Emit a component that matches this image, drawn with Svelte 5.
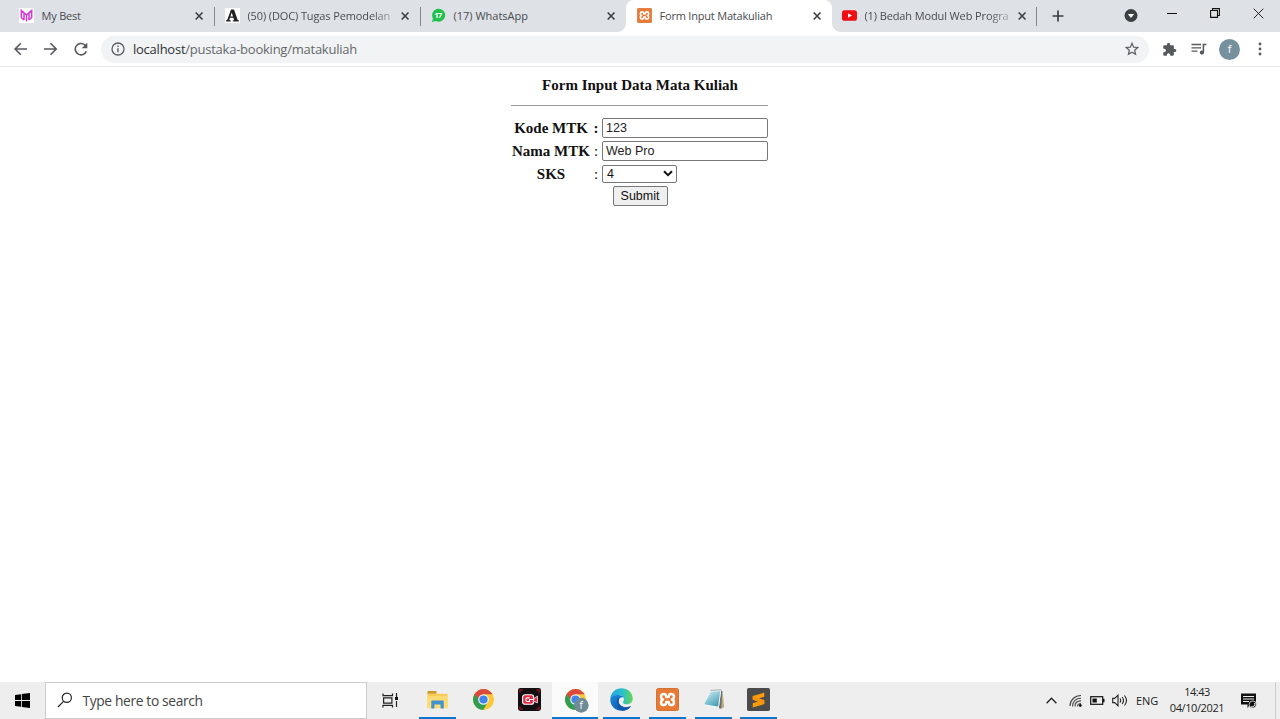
<script>
  const tabs = [
    { icon: 'my', title: 'My Best' },
    { icon: 'academia', title: '(50) (DOC) Tugas Pemodelan', fade: true },
    { icon: 'wa', title: '(17) WhatsApp' },
    { icon: 'xampp', title: 'Form Input Matakuliah', active: true },
    { icon: 'yt', title: '(1) Bedah Modul Web Progra', fade: true }
  ];
  const apps = [
    { icon: 'folder', open: true },
    { icon: 'chrome' },
    { icon: 'recorder' },
    { icon: 'chromeUser', open: true, active: true },
    { icon: 'edge', open: true },
    { icon: 'xampp', open: true },
    { icon: 'notepad', open: true },
    { icon: 'sublime', open: true }
  ];
  let kode = $state('123');
  let nama = $state('Web Pro');
</script>

{#snippet chromeLogo()}
  <circle cx="12" cy="12" r="11" fill="#fbc934" />
  <path d="M12 12 2.5 6.5A11 11 0 0 1 21.5 6.5H12Z" fill="#dc4a3d" />
  <path d="M2.5 6.5A11 11 0 0 0 11.6 23L16.6 14.6 12 12 7.3 14.7Z" fill="#2f9e50" />
  <path d="M2.5 6.5 7.3 14.7 12 12 12 6.5Z" fill="#dc4a3d" />
  <path d="M2.5 6.5 7.3 14.7 8 12Z" fill="#2f9e50" />
  <circle cx="12" cy="12" r="5.5" fill="#f4f4f4" />
  <circle cx="12" cy="12" r="4.3" fill="#4285ec" />
{/snippet}

{#snippet icon(name)}
  {#if name === 'my'}
    <svg viewBox="0 0 15 15"><rect width="15" height="15" fill="#fff" /><path d="M2.300 10V2.500L7.500 7l5.200-4.500V10M5 12V5M10 12V5M7.500 7.500v6M2.300 9.500 5 12M12.700 9.500 10 12" fill="none" stroke="#d735d8" stroke-width="1.500" /></svg>
  {:else if name === 'academia'}
    <svg viewBox="0 0 15 15"><rect width="15" height="15" fill="#fff" /><path d="M6 1.500h3L12.700 12l1.200.5v.9H7.800v-.9l1.300-.5-.7-2.200H5L4.300 12l1.400.5v.9H1v-.9l1.200-.5ZM6.700 4.500 5.400 8.600H8Z" fill="#222" /></svg>
  {:else if name === 'wa'}
    <svg viewBox="0 0 15 15"><path d="M1 14 2 10.5A6.500 6.500 0 1 1 4.600 13Z" fill="#1fc04b" /><text x="7.300" y="10.200" text-anchor="middle" font-size="7.800" font-weight="700" fill="#fff" textLength="8">17</text></svg>
  {:else if name === 'xampp'}
    <svg viewBox="0 0 24 24"><rect x=".5" y=".5" width="23" height="23" rx="2" fill="#e87a35" stroke="#cf6d30" /><path d="M8.200 6.200C4.300 6.200 4.500 11.200 7.400 12 4.500 12.800 4.300 17.800 8.200 17.800c2.300 0 2.500-1.600 2.500-3.300h2.600c0 1.700.2 3.300 2.500 3.300 3.900 0 3.700-5 .8-5.800 2.900-.8 3.100-5.800-.8-5.800-2.300 0-2.500 1.600-2.500 3.300h-2.600c0-1.700-.2-3.300-2.500-3.300Z" fill="none" stroke="#fff" stroke-width="2.500" stroke-linejoin="round" /></svg>
  {:else if name === 'yt'}
    <svg viewBox="0 0 15 15"><rect y="2.200" width="15" height="10.600" rx="2.600" fill="#f20d14" /><path d="m6 5.300 4 2.200-4 2.200Z" fill="#fff" /></svg>
  {:else if name === 'folder'}
    <svg viewBox="0 0 24 24"><path d="M1.500 6h21v15h-21Z" fill="#f7cb57" /><path d="M1.500 6V4q0-1 1-1H10q1 0 1 1v2Z" fill="#cf9a24" /><path d="M1.500 8.500h21V21h-21Z" fill="#ffdb75" /><path d="M5.500 21.500V14q0-1 1-1h11q1 0 1 1v7.500h-3.300v-4.200H8.800v4.200Z" fill="#4193ce" /></svg>
  {:else if name === 'chrome'}
    <svg viewBox="0 0 24 24">{@render chromeLogo()}</svg>
  {:else if name === 'chromeUser'}
    <svg viewBox="0 0 24 24" class="overflow">{@render chromeLogo()}<circle cx="18" cy="18" r="7.700" fill="#6f8b98" /><text x="18" y="21.600" text-anchor="middle" font-size="10.500" fill="#fff">f</text></svg>
  {:else if name === 'recorder'}
    <svg viewBox="0 0 24 24"><rect width="24" height="24" rx="2.500" fill="#130e11" /><path d="M2 5V2h3M19 2h3v3M22 19v3h-3M5 22H2v-3" fill="none" stroke="#ae1728" stroke-width="1.100" /><rect x="4.800" y="7" width="11.500" height="10" rx="2.500" fill="#e12c48" stroke="#fff" stroke-width="1.200" /><path d="m16.500 11 3.800-2.500v7L16.500 14" fill="#e12c48" stroke="#fff" stroke-width=".8" /><path d="M12 10.300H9.500a1.900 1.900 0 0 0 0 3.700H12v-2h5" fill="none" stroke="#fff" stroke-width="1.100" /></svg>
  {:else if name === 'edge'}
    <svg viewBox="0 0 24 24">
      <defs>
        <linearGradient id="edgeTop"><stop offset="0" stop-color="#1fa4df" /><stop offset=".55" stop-color="#2cc0cf" /><stop offset="1" stop-color="#66d64b" /></linearGradient>
        <linearGradient id="edgeLow" x1="0" y1="0" x2="1" y2="1"><stop offset="0" stop-color="#1b8be0" /><stop offset="1" stop-color="#0b4a9b" /></linearGradient>
      </defs>
      <path d="M.3 11C1.200 4.500 6 .3 12 .3c6.800 0 11.700 5 11.700 10.700 0 3.700-2.600 6-6 6-2.600 0-4.200-.9-4.200-2 0-.8 1.100-1.200 1.100-3 0-2.500-2.600-4.600-6.100-4.600-3.700 0-6.500 1.300-8.200 3.600Z" fill="url(#edgeTop)" />
      <path d="M.3 12.500C.3 9 3.600 7.400 8.500 7.400c2.700 0 4.700 1 5.600 2.400C10.800 9.200 9 11 9 13.700c0 3.700 4 6.300 8.200 6.300 2 0 3.600-.5 4.700-1.100C20 22 16.500 23.800 12.500 23.800 5.700 23.800.3 18.700.3 12.500Z" fill="url(#edgeLow)" />
      <path d="M8.500 10.500C5.500 14.500 7.500 21 13 23.700c4 0 7-1.800 8.900-4.800-6 3-13 .5-12.900-5.200 0-1.200.3-2.300 1-3.200Z" fill="#1058a9" />
    </svg>
  {:else if name === 'notepad'}
    <svg viewBox="0 0 24 24">
      <defs><linearGradient id="page" x1="0" y1="0" x2=".7" y2="1"><stop offset="0" stop-color="#d5edf2" /><stop offset=".5" stop-color="#8ec9d7" /><stop offset="1" stop-color="#479db7" /></linearGradient></defs>
      <path d="m20 2.500 1.500 1 1.700 16.500L19 22Z" fill="#c2ad7c" /><path d="m20 2.500 1 1-.8 18-2.700-.5Z" fill="#69706f" /><path d="M9 2.500 20 2 17.600 21 .8 18.200Z" fill="#e9f5f7" /><path d="M9.200 4 19 3.500 16.800 19.200 2.400 17Z" fill="url(#page)" /><path d="m8.700 2.400 11.500-.5" stroke="#a0a9a8" />
    </svg>
  {:else if name === 'sublime'}
    <svg viewBox="0 0 24 24"><rect width="24" height="24" rx="1.800" fill="#4b4b4b" /><path d="m6 8.300 12-3.500V9l-6 2 6 2v3.800L6 20.300V16l6-2-6-2Z" fill="#ff9c0a" /><path d="m6 8.300 12 4.300v4.200L6 12.300Z" fill="#f9920a" /></svg>
  {/if}
{/snippet}

<div class="screen">
  <header class="tabstrip">
    {#each tabs as tab, i}
      <div class="tab" class:active={tab.active} class:line={i !== 2 && i !== 3}>
        <span class="favicon">{@render icon(tab.icon)}</span>
        <span class="title t{i}" class:fade={tab.fade}>{tab.title}</span>
        <svg class="close" viewBox="0 0 10 10"><path d="m1.700 1.500 6.800 7m0-7-6.800 7" stroke="#3c4043" stroke-width="1.600" /></svg>
      </div>
    {/each}
    <svg class="plus" viewBox="0 0 12 12"><path d="M6 .5v11M.5 6h11" stroke="#3c4043" stroke-width="1.700" /></svg>
    <div class="controls">
      <svg width="14" height="14" viewBox="0 0 14 14"><circle cx="7" cy="7.500" r="6.500" fill="#3c4043" /><path d="M3.900 5.900h6.200L7 10Z" fill="#fff" /></svg>
      <svg class="min" width="10" height="12" viewBox="0 0 10 12"><path d="M0 6.500h10" stroke="#111" /></svg>
      <svg class="max" width="10" height="10" viewBox="0 0 10 10"><path d="M.6 2.500h6.900v6.900H.6ZM2.500 2.500V.6h6.900v6.900H7.500" fill="none" stroke="#111" stroke-width="1.100" /></svg>
      <svg class="quit" width="11" height="11" viewBox="0 0 11 11"><path d="m.7.7 9.600 9.600m0-9.600L.7 10.300" stroke="#222" /></svg>
    </div>
  </header>

  <nav class="toolbar">
    <svg class="nav" viewBox="0 0 14 14"><path d="M13 7H1.500M6.800 1.300 1.100 7l5.700 5.700" fill="none" stroke="#55585c" stroke-width="1.600" /></svg>
    <svg class="nav" viewBox="0 0 14 14"><path d="M0 7h12M6.500 1.300 12.200 7l-5.700 5.700" fill="none" stroke="#55585c" stroke-width="1.600" /></svg>
    <svg class="nav" viewBox="0 0 14 14"><path d="M12.300 9.200A5.700 5.700 0 1 1 10.800 2.900L11.500 3.600" fill="none" stroke="#55585c" stroke-width="1.600" /><path d="M13.300.7v5.600H7.700Z" fill="#55585c" /></svg>
    <div class="omnibox">
      <svg width="14" height="14" viewBox="0 0 14 14"><circle cx="7" cy="7" r="6" fill="none" stroke="#5a5d61" stroke-width="1.300" /><path d="M7 6.200v4M7 3.500v1.400" stroke="#5a5d61" stroke-width="1.400" /></svg>
      <span class="url"><b>localhost</b>/pustaka-booking/matakuliah</span>
      <svg class="star" width="14" height="14" viewBox="0 0 14 14"><path d="m7 1.300 1.650 3.850 4.150.35-3.150 2.750.95 4.100L7 10.200l-3.600 2.150.95-4.100L1.200 5.500l4.150-.35Z" fill="none" stroke="#5a5d61" stroke-width="1.200" /></svg>
    </div>
    <svg class="puzzle" viewBox="0 0 24 24"><path d="M20.500 11H19V7a2 2 0 0 0-2-2h-4V3.500a2.500 2.500 0 0 0-5 0V5H4a2 2 0 0 0-2 2v3.800h1.500a2.700 2.700 0 0 1 0 5.400H2V20a2 2 0 0 0 2 2h3.800v-1.500a2.700 2.700 0 0 1 5.400 0V22H17a2 2 0 0 0 2-2v-4h1.500a2.500 2.500 0 0 0 0-5Z" fill="#55585c" /></svg>
    <svg class="music" viewBox="0 0 16 13"><path d="M.5 1.500h9.500M.5 4.800h9.500M.5 8.100h6" stroke="#55585c" stroke-width="1.300" /><path d="M12.400 9.500V1.500h3" fill="none" stroke="#55585c" stroke-width="1.500" /><circle cx="10.900" cy="9.600" r="2.100" fill="#55585c" /></svg>
    <span class="avatar">f</span>
    <svg class="dots" viewBox="0 0 4 14"><circle cx="2" cy="2" r="1.400" /><circle cx="2" cy="7" r="1.400" /><circle cx="2" cy="12" r="1.400" /></svg>
  </nav>

  <main>
    <form onsubmit={(e) => e.preventDefault()}>
      <h1>Form Input Data Mata Kuliah</h1>
      <hr />
      <div class="row first"><b>Kode MTK</b><b class="colon">:</b><input bind:value={kode} /></div>
      <div class="row second"><b>Nama MTK</b><span class="colon">:</span><input bind:value={nama} /></div>
      <div class="row third">
        <b>SKS</b><span class="colon">:</span>
        <div class="select"><span>4</span><svg width="10" height="7" viewBox="0 0 10 7"><path d="m1 1.200 4 4 4-4" fill="none" stroke="#111" stroke-width="2" /></svg></div>
      </div>
      <button>Submit</button>
    </form>
  </main>

  <footer>
    <div class="start"><svg width="15" height="15" viewBox="0 0 15 15"><path d="m0 2 6-.8v5.900H0ZM6.800 1.100 15 0v7.100H6.800ZM0 7.900h6v5.900L0 13ZM6.800 7.900H15V15l-8.200-1.100Z" /></svg></div>
    <div class="search">
      <svg width="16" height="16" viewBox="0 0 16 16"><circle cx="9.800" cy="5.800" r="4.600" fill="none" stroke="#222" stroke-width="1.200" /><path d="M6.500 9.300 1 15" stroke="#222" stroke-width="1.200" /></svg>
      <span>Type here to search</span>
    </div>
    <div class="taskview"><svg width="17" height="15" viewBox="0 0 17 15"><path d="M1 .5v2.200h9.500V.5M1 14.500v-2.200h9.500v2.200M1.600 4.800h8.300v5.400H1.600ZM14.500 0v4M14.500 8v6" fill="none" stroke="#222" stroke-width="1.200" /><rect x="13" y="4" width="3" height="3" fill="#111" /></svg></div>
    {#each apps as app}
      <div class="app" class:current={app.active}><span class="appicon">{@render icon(app.icon)}</span><i class:open={app.open}></i></div>
    {/each}
    <div class="tray">
      <svg class="chev" width="11" height="7" viewBox="0 0 11 7"><path d="m.6 6.200 4.900-5 4.900 5" fill="none" stroke="#222" stroke-width="1.300" /></svg>
      <svg class="wifi" width="13" height="13" viewBox="0 0 13 13"><g fill="none" stroke="#444" stroke-width="1.100"><path d="M1 12C1 6 6 1.500 12 1.500M3.500 12.500c0-5 3.700-8.300 8.500-8.300M6 12.500c0-3.500 2.500-5.600 6-5.600M8.500 12.500c0-2 1.300-3 3.500-3" /></g><circle cx="11.300" cy="11.500" r="1.400" fill="#111" /></svg>
      <svg class="battery" width="15" height="9" viewBox="0 0 15 9"><rect x=".7" y=".7" width="12" height="7.600" fill="none" stroke="#111" stroke-width="1.200" /><path d="M2.500 2.500h4.300v4H2.500ZM13 2.800h1.500v3.400H13Z" fill="#111" /></svg>
      <svg class="sound" width="16" height="13" viewBox="0 0 16 13"><path d="M.7 4.400h2L6 1.200v10.600L2.700 8.600h-2ZM8 4.500q1.400 2 0 4M10.200 3q2.600 3.500 0 7M12.500 1.500q4 5 0 10" fill="none" stroke="#222" stroke-width="1.100" /></svg>
      <span class="lang">ENG</span>
      <div class="clock"><span class="time">14:43</span><span class="date">04/10/2021</span></div>
      <svg class="note" width="16" height="16" viewBox="0 0 16 16"><path d="M0 .5h15v11H9L6.500 15v-3.500H0Z" fill="#111" /><path d="M2 3.500h11M2 6h11M2 8.500h6" stroke="#eee" /><circle cx="11.700" cy="11.500" r="3.600" fill="#111" stroke="#eee" stroke-width=".8" /><path d="M10.200 13.500a2.500 2.500 0 0 0 3.300-3.500" fill="none" stroke="#eee" /></svg>
    </div>
  </footer>
</div>

<style>
  :global(body) { margin: 0; overflow: hidden; background: #fff; }
  .screen { width: 1280px; height: 719px; display: flex; flex-direction: column; font-family: "Open Sans", sans-serif; color: #3c4043; }
  .screen * { box-sizing: border-box; }
  svg { display: block; flex: none; }
  .overflow { overflow: visible; }

  .tabstrip { height: 32px; background: #dee1e6; display: flex; padding-left: 8px; flex: none; }
  .tab { width: 206px; height: 32px; display: flex; align-items: center; padding: 0 0 1px 11px; position: relative; flex: none; }
  .tab:nth-child(5) { width: 204px; padding-left: 10px; }
  .tab.line::after { content: ""; position: absolute; right: -1px; top: 7px; width: 1px; height: 19px; background: #85888d; }
  .tab.active { background: #fff; border-radius: 8px 8px 0 0; }
  .tab.active::before, .tab.active::after { content: ""; position: absolute; bottom: 0; width: 8px; height: 8px; }
  .tab.active::before { left: -8px; background: radial-gradient(circle at 0 0, #dee1e6 7.500px, #fff 8px); }
  .tab.active::after { right: -8px; background: radial-gradient(circle at 100% 0, #dee1e6 7.500px, #fff 8px); }
  .favicon { width: 15px; height: 15px; margin-right: 7.500px; flex: none; }
  .favicon svg { width: 15px; height: 15px; }
  .title { width: 144px; margin-right: 8.500px; font-size: 11px; line-height: 16px; letter-spacing: -.2px; white-space: nowrap; color: #494c50; flex: none; }
  .t0 { letter-spacing: -.2px; }
  .t1 { letter-spacing: -.12px; }
  .t2 { letter-spacing: 0; }
  .t4 { letter-spacing: -.12px; }
  .fade { mask-image: linear-gradient(90deg, #000 86%, transparent 106%); }
  .close { width: 10px; height: 10px; }
  .plus { width: 12px; height: 12px; margin: 10px 0 0 16px; }
  .controls { margin-left: auto; padding: 8px 16px 0 0; display: flex; align-items: flex-start; }
  .min { margin: -1px 0 0 29px; }
  .max { margin: 0 0 0 33px; }
  .quit { margin: 0 0 0 33px; }

  .toolbar { height: 35px; border-bottom: 1px solid #e8e8e8; display: flex; align-items: center; padding: 0 18px 0 14px; flex: none; }
  .nav { width: 14px; height: 14px; margin-right: 16px; }
  .nav:nth-child(3) { margin-right: 13px; }
  .omnibox { width: 1048px; height: 27px; border-radius: 14px; background: #f1f3f4; display: flex; align-items: center; padding: 0 10px 0 10px; flex: none; }
  .url { margin-left: 8px; font-size: 13px; letter-spacing: -.24px; color: #65686c; white-space: nowrap; }
  .url b { font-weight: 400; color: #303236; }
  .star { margin-left: auto; }
  .puzzle { width: 15px; height: 15px; margin-left: 13px; }
  .music { width: 16px; height: 13px; margin-left: 14px; }
  .avatar { width: 21px; height: 21px; margin-left: 12px; border-radius: 50%; background: #76919d; color: #fff; font-size: 11px; line-height: 20px; text-align: center; }
  .dots { width: 4px; height: 14px; margin-left: auto; fill: #55585c; }

  main { flex: 1; display: flex; justify-content: center; align-items: flex-start; padding-right: 1px; }
  form { width: 257px; display: flex; flex-direction: column; font-family: "Liberation Serif", serif; font-size: 15px; color: #111; }
  h1 { margin: 9px 0 0 1px; font-size: 15px; line-height: 18px; text-align: center; white-space: nowrap; }
  hr { width: 100%; height: 1px; margin: 11px 0 12px; border: 0; background: #999; }
  .row { display: grid; grid-template-columns: 79px 12px 166px; align-items: center; text-align: center; height: 20px; white-space: nowrap; }
  .row > b:first-child { padding-left: 1px; }
  .second { margin-top: 3px; }
  .third { margin-top: 3px; height: 19px; }
  .third > b, .third > .colon { padding-top: 1px; }
  .colon { text-align: center; }
  input { width: 166px; height: 20px; border: 1px solid #777; border-radius: 2px; padding: 0 3px 1px; background: #fff; color: #222; font: 12.500px "Liberation Sans", sans-serif; outline: 0; }
  .select { width: 75px; height: 18px; display: flex; justify-content: space-between; align-items: center; border: 1px solid #777; border-radius: 2px; padding: 0 3px 0 4px; font: 12.500px "Liberation Sans", sans-serif; }
  button { align-self: center; width: 55px; height: 20px; margin: 3px 0 0 1px; padding: 0; border: 1px solid #777; border-radius: 2px; background: #efefef; color: #111; font: 12.500px "Liberation Sans", sans-serif; }

  footer { height: 37px; flex: none; background: #eee; display: flex; }
  .start { width: 45px; display: grid; place-items: center; }
  .search { width: 322px; border: 1px solid #ccc; background: #fff; display: flex; align-items: center; padding: 0 0 0 11px; color: #444; }
  .search svg { margin-top: -2px; }
  .search span { margin-left: 9.500px; font-size: 13.800px; letter-spacing: -.36px; white-space: nowrap; }
  .taskview { width: 47.800px; display: grid; place-items: center; padding-bottom: 1px; }
  .app { width: 45.900px; display: grid; grid-template-rows: 35px 2px; justify-items: center; align-items: center; }
  .current { background: #fbfbfb; }
  .appicon { width: 23px; height: 23px; }
  .appicon svg { width: 23px; height: 23px; }
  .app i { width: 37px; height: 2px; }
  .app i.open { background: #0a78d0; }
  .app.current i { width: 100%; }
  .tray { flex: 1; display: flex; align-items: center; justify-content: flex-end; border-right: 1px solid #ccc; margin-right: 4px; color: #222; }
  .wifi { margin-left: 12px; }
  .battery { margin-left: 8px; }
  .sound { margin-left: 7px; }
  .lang { width: 23px; margin: -1px 0 0 8px; font-size: 11px; letter-spacing: -.1px; white-space: nowrap; }
  .clock { width: 56px; margin: -2px 16px 0 10px; display: flex; flex-direction: column; align-items: center; font-size: 11px; line-height: 16px; white-space: nowrap; }
  .time { letter-spacing: -.5px; }
  .date { letter-spacing: -.4px; }
  .note { margin-right: 18px; }
</style>
